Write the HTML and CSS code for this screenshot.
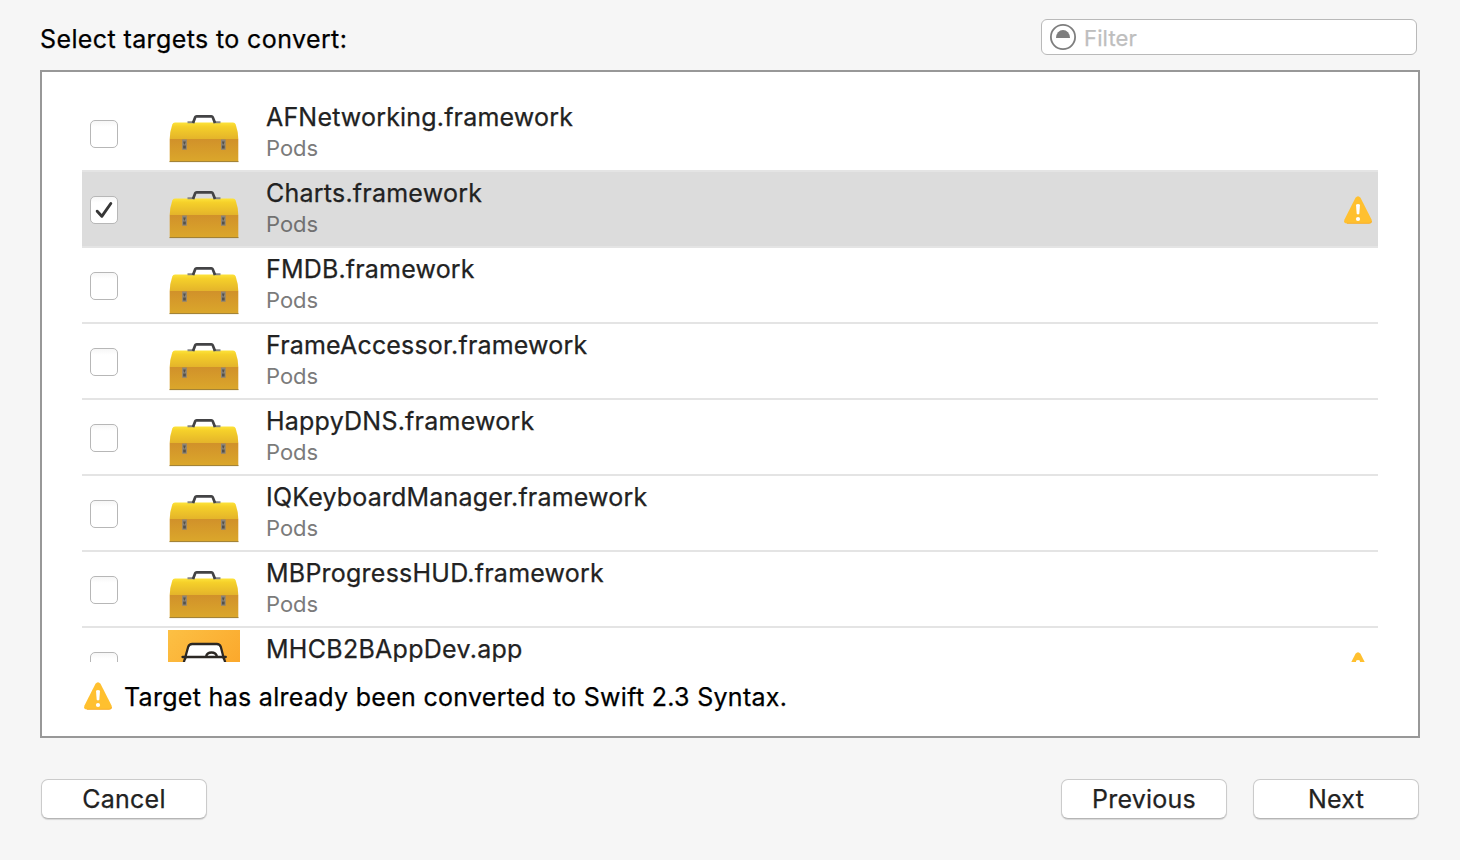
FILE: index.html
```
<!DOCTYPE html>
<html lang="en">
<head>
<meta charset="utf-8">
<title>Select targets to convert</title>
<link rel="stylesheet" href="styles.css">
</head>
<body>
<svg class="defs" width="0" height="0" aria-hidden="true">
  <defs>
    <linearGradient id="lid" x1="0" y1="0" x2="0" y2="1"><stop offset="0" stop-color="#fde33a"/><stop offset=".25" stop-color="#f5d02a"/><stop offset="1" stop-color="#e4b42a"/></linearGradient>
    <linearGradient id="box" x1="0" y1="0" x2="0" y2="1"><stop offset="0" stop-color="#d1912a"/><stop offset="1" stop-color="#dba72b"/></linearGradient>
    <linearGradient id="app" x1="0" y1="0" x2="1" y2="1"><stop offset="0" stop-color="#fcc044"/><stop offset="1" stop-color="#fb9f23"/></linearGradient>
    <symbol id="toolbox" viewBox="0 0 72 52">
      <path d="M7 9.500h58q2 0 2.700 2l2 7.500.6 7H1.700l.6-7 2-7.500q.700-2 2.700-2z" fill="url(#lid)"/>
      <path d="M1.700 26h68.600v22.500H1.700z" fill="url(#box)"/>
      <path d="M1.500 48.600h69" stroke="#9b7b2e" stroke-width="1"/>
      <path d="M19.500 9.300h7M45.500 9.300h7" stroke="#858585" stroke-width="2"/>
      <path d="M25 10l2.300-5.900q.3-.8 1.300-.8h14.800q1 0 1.300.8L47 10" fill="none" stroke="#434345" stroke-width="2.700"/>
      <path d="M14.200 26.500h4.600v10.300h-4.600zM53 26.500h4.600v10.300H53z" fill="#8b8478"/>
      <path d="M15.200 28.500h2.600l-1 3h-.8zM15.200 32.500h2.600v3h-2.600zM54 28.500h2.600l-1 3h-.8zM54 32.500h2.600v3H54z" fill="#55514a"/>
    </symbol>
    <symbol id="warning" viewBox="0 0 28 28">
      <path d="M11.500 1.800Q14-1.200 16.500 1.800L27.400 23.200Q29 27.500 25 27.600H3Q-1 27.500.6 23.200z" fill="#ffc02f"/>
      <path d="M3 27.300h22q2.400 0 2.500-2" fill="none" stroke="#f7a928" stroke-width=".8"/>
      <path d="M12 8.800q2-1.600 4 0l-.7 9q-1.300 1.600-2.600 0z" fill="#fff"/>
      <circle cx="14" cy="23" r="2.100" fill="#fff"/>
    </symbol>
    <symbol id="car" viewBox="0 0 72 72">
      <path d="M0 0h72v72H0z" fill="url(#app)"/>
      <path d="M17 27l3.200-10.200q1-2.800 4-2.800h24.600q3 0 4 2.800L55.500 27z" fill="#fff"/>
      <path d="M17 28h38.500l2 7v15h-42V35z" fill="#fff"/>
      <path d="M14.500 27h43.300M17.500 26.500l2.700-9.700q1-2.800 4-2.800h24.600q3 0 4 2.800l2.500 9.700M17.500 28q-2 3-2 8v14h42V36q0-5-2-8M38 26.500q1-4 5.500-4t5.500 4" fill="none" stroke="#2b2723" stroke-width="2.300" stroke-linecap="round"/>
    </symbol>
  </defs>
</svg>
<main class="sheet">
  <header class="head">
    <h1 class="title">Select targets to convert:</h1>
    <div class="filter">
      <svg class="filter-icon" viewBox="0 0 26 26"><circle cx="13" cy="13" r="12.100" fill="none" stroke="#7e7e7e" stroke-width="1.800"/><path d="M6 14a7 8 0 0 1 14 0z" fill="#7e7e7e"/></svg>
      <span class="placeholder">Filter</span>
    </div>
  </header>
  <section class="panel">
    <ul class="list">
      <li class="row"><span class="check"></span><svg class="kit"><use href="#toolbox"/></svg><div class="info"><div class="name snug">AFNetworking.framework</div><div class="project">Pods</div></div></li>
      <li class="row selected"><span class="check"><svg class="tick" viewBox="0 0 28 28"><path d="M7.200 15.200l4.600 5.100 9-12.800" fill="none" stroke="#363636" stroke-width="2.900" stroke-linecap="round" stroke-linejoin="round"/></svg></span><svg class="kit"><use href="#toolbox"/></svg><div class="info"><div class="name">Charts.framework</div><div class="project">Pods</div></div><svg class="alert"><use href="#warning"/></svg></li>
      <li class="row"><span class="check"></span><svg class="kit"><use href="#toolbox"/></svg><div class="info"><div class="name snug">FMDB.framework</div><div class="project">Pods</div></div></li>
      <li class="row"><span class="check"></span><svg class="kit"><use href="#toolbox"/></svg><div class="info"><div class="name snug">FrameAccessor.framework</div><div class="project">Pods</div></div></li>
      <li class="row"><span class="check"></span><svg class="kit"><use href="#toolbox"/></svg><div class="info"><div class="name">HappyDNS.framework</div><div class="project">Pods</div></div></li>
      <li class="row"><span class="check"></span><svg class="kit"><use href="#toolbox"/></svg><div class="info"><div class="name snug">IQKeyboardManager.framework</div><div class="project">Pods</div></div></li>
      <li class="row"><span class="check"></span><svg class="kit"><use href="#toolbox"/></svg><div class="info"><div class="name">MBProgressHUD.framework</div><div class="project">Pods</div></div></li>
      <li class="row"><span class="check"></span><svg class="kit app"><use href="#car"/></svg><div class="info"><div class="name last">MHCB2BAppDev.app</div></div><svg class="alert"><use href="#warning"/></svg></li>
    </ul>
    <div class="notice"><svg class="notice-icon"><use href="#warning"/></svg><span class="notice-text">Target has already been converted to Swift 2.3 Syntax.</span></div>
  </section>
  <footer class="foot">
    <button class="btn">Cancel</button>
    <div class="group"><button class="btn">Previous</button><button class="btn">Next</button></div>
  </footer>
</main>
</body>
</html>
```
FILE: styles.css
```
* { box-sizing: border-box; }
body { margin: 0; background: #f6f6f6; font-family: Inter, "Liberation Sans", sans-serif; font-size: 25px; color: #000; -webkit-text-stroke: .25px; }
.defs { display: block; height: 0; }
.sheet { width: 1460px; height: 860px; padding: 0 40px; overflow: hidden; }
.head { height: 70px; display: flex; justify-content: space-between; align-items: flex-start; padding: 19px 3px 0 0; }
.title { margin: 4px 0 0; font-size: 25px; font-weight: 400; line-height: 32px; letter-spacing: .39px; white-space: nowrap; }
.filter { width: 376px; height: 36px; border: 1px solid #b9b9b9; border-radius: 6px; background: #fff; display: flex; align-items: center; padding: 0 8px; gap: 8px; }
.filter-icon { width: 26px; height: 26px; }
.placeholder { font-size: 22px; line-height: 34px; letter-spacing: .15px; color: #bebebe; padding-top: 2px; }
.panel { height: 668px; border: 2px solid #989898; background: #fff; padding: 24px 40px 0; }
.list { margin: 0; padding: 0; list-style: none; height: 566px; overflow: hidden; }
.row { height: 76px; border-bottom: 2px solid #e4e4e4; display: flex; align-items: flex-start; padding: 0 6px 0 8px; }
.row.selected { background: #dcdcdc; box-shadow: 0 -2px #e4e4e4; }
.check { width: 28px; height: 28px; margin: 24px 50px 0 0; border: 1px solid #b7b7b7; border-radius: 5px; background: linear-gradient(#f6f6f6, #fff 6px); flex: none; }
.tick { display: block; width: 28px; height: 28px; margin: -1px; }
.kit { width: 72px; height: 52px; margin-top: 17px; flex: none; }
.kit.app { height: 72px; margin-top: 2px; }
.info { margin-left: 26px; flex: 1; }
.name { margin-top: 5px; font-size: 25px; line-height: 32px; letter-spacing: .23px; color: #222; white-space: nowrap; }
.name.snug { letter-spacing: .18px; }
.name.last { margin-top: 8px; line-height: 26px; letter-spacing: .28px; }
.project { font-size: 22px; line-height: 30px; color: #7b7b7b; -webkit-text-stroke: 0; }
.selected .project { color: #717171; }
.alert { width: 28px; height: 28px; margin-top: 24px; flex: none; }
.notice { display: flex; align-items: flex-start; gap: 12px; padding: 19px 0 0 2px; }
.notice-icon { width: 28px; height: 28px; margin-top: 1px; flex: none; }
.notice-text { line-height: 32px; letter-spacing: .3px; white-space: nowrap; }
.foot { display: flex; justify-content: space-between; padding: 41px 1px 0; }
.group { display: flex; gap: 26px; }
.btn { width: 166px; height: 40px; padding: 1px 0 0; border: 1px solid #cbcbcb; border-bottom-color: #b5b5b5; border-radius: 7px; background: #fff; box-shadow: 0 1px 1px #0002; font: 25px/37px Inter, "Liberation Sans", sans-serif; letter-spacing: .25px; color: #222; -webkit-text-stroke: .25px; }
```
